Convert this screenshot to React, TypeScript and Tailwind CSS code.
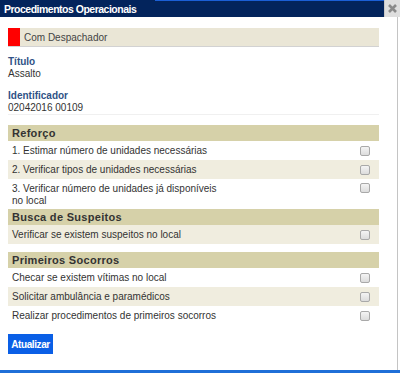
import React from 'react';

type Item = { label: React.ReactNode; shaded?: boolean; tall?: boolean };
type Section = { title: string; items: Item[]; gapAfter?: boolean };

const sections: Section[] = [
  {
    title: 'Reforço',
    items: [
      { label: '1. Estimar número de unidades necessárias' },
      { label: '2. Verificar tipos de unidades necessárias', shaded: true },
      {
        label: (
          <>
            3. Verificar número de unidades já disponíveis
            <br />
            no local
          </>
        ),
        tall: true,
      },
    ],
  },
  {
    title: 'Busca de Suspeitos',
    items: [{ label: 'Verificar se existem suspeitos no local', shaded: true }],
    gapAfter: true,
  },
  {
    title: 'Primeiros Socorros',
    items: [
      { label: 'Checar se existem vítimas no local' },
      { label: 'Solicitar ambulância e paramédicos', shaded: true },
      { label: 'Realizar procedimentos de primeiros socorros' },
    ],
  },
];

const Check: React.FC = () => (
  <span className="w-[10px] h-[10px] shrink-0 rounded-[2px] border border-[#a9a9a9] bg-gradient-to-b from-[#f4f4f4] to-[#dcdcdc]" />
);

const App: React.FC = () => {
  return (
    <div className="w-[400px] h-[373px] flex flex-col bg-white overflow-hidden font-['Liberation_Sans',Arial,sans-serif] text-[#333]">
      {/* title bar */}
      <div className="flex h-[17px] shrink-0">
        <div className="flex-1 flex flex-col bg-[#03245c]">
          <div className="flex h-px shrink-0">
            <div className="w-[155px]" />
            <div className="flex-1 bg-[#1b5fd6]" />
          </div>
          <div className="flex-1 flex items-center pl-[4px] text-white font-bold text-[10.5px] tracking-[-0.5px] leading-none">
            Procedimentos Operacionais
          </div>
        </div>
        <div className="w-[16px] flex items-center justify-center bg-[#dedede] border-l border-[#c8c8c8]">
          <svg width="11" height="11" viewBox="0 0 11 11">
            <path d="M2 2 L9 9 M9 2 L2 9" stroke="#8a8a8a" strokeWidth="2.6" strokeLinecap="butt" />
          </svg>
        </div>
      </div>

      <div className="flex-1 flex">
        <div className="w-[398px] border-r border-[#c4c4c4] pl-[8px] pr-[18px] pt-[11px]">
          {/* status */}
          <div className="flex h-[19px] bg-[#eae6d6] border-b border-[#d2d2d2]">
            <div className="w-[12px] bg-[#ff0000]" />
            <div className="flex items-center pl-[4px] text-[10px] text-[#444]">Com Despachador</div>
          </div>

          <div className="pt-[9px] text-[10px] leading-[12px]">
            <div className="font-bold text-[#2f5286]">Título</div>
            <div>Assalto</div>
            <div className="font-bold text-[#2f5286] mt-[10px]">Identificador</div>
            <div>02042016 00109</div>
          </div>

          <div className="h-px bg-[#f0f0f0] mb-[10px]" />

          {sections.map((s) => (
            <div key={s.title} className={s.gapAfter ? 'mb-[8px]' : ''}>
              <div className="h-[16px] flex items-center pl-[4px] bg-[#d6d1a9] font-bold text-[11px] tracking-[0.3px] text-[#333]">
                {s.title}
              </div>
              {s.items.map((it, i) => (
                <div
                  key={i}
                  className={`flex justify-between pl-[4px] pr-[9px] text-[10px] ${
                    it.shaded ? 'bg-[#f0eddf]' : ''
                  } ${it.tall ? 'h-[30px] items-start pt-[4px] leading-[12px]' : 'h-[19px] items-center'}`}
                >
                  <span>{it.label}</span>
                  <Check />
                </div>
              ))}
            </div>
          ))}

          <button className="mt-[9px] h-[20px] w-[45px] bg-[#0a5fe6] text-white font-bold text-[10px] tracking-[-0.4px]">
            Atualizar
          </button>
        </div>
        <div className="flex-1" />
      </div>
      <div className="h-[3px] shrink-0 bg-[#1f6fd8]" />
    </div>
  );
};

export default App;
